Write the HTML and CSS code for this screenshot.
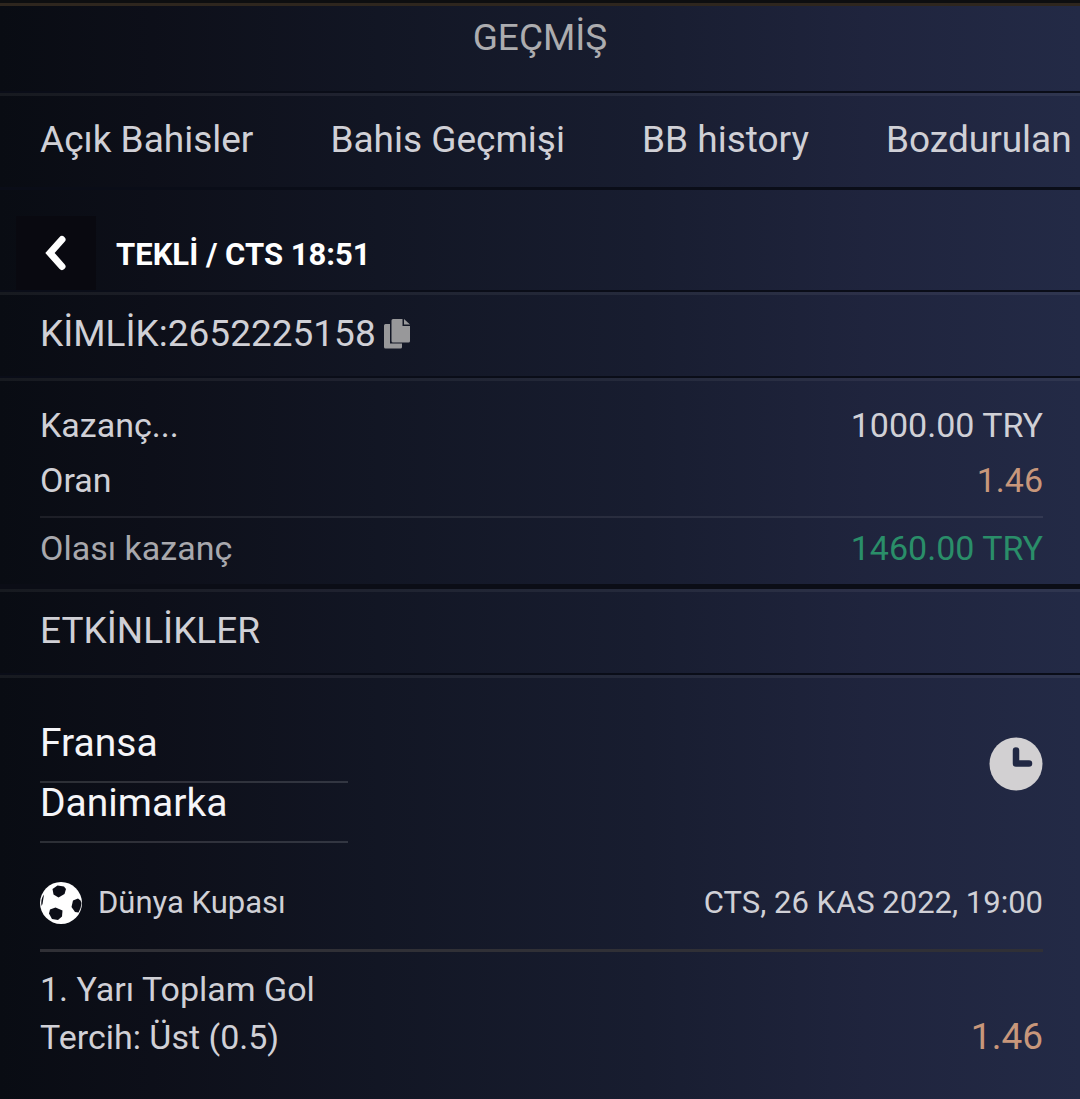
FILE: index.html
```html
<!DOCTYPE html>
<html lang="tr">
<head>
    <meta charset="UTF-8">
    <meta name="viewport" content="width=device-width, initial-scale=1.0">
    <title>Geçmiş</title>
    <link rel="stylesheet" href="styles.css">
</head>
<body>
    <header class="header">
        <h1>GEÇMİŞ</h1>
    </header>

    <nav class="tabs">
        <a href="#open">Açık Bahisler</a>
        <a href="#history">Bahis Geçmişi</a>
        <a href="#bb">BB history</a>
        <a href="#cashed">Bozdurulan</a>
    </nav>

    <main>
        <div class="ticket-head">
            <button class="back" type="button" aria-label="Geri">
                <svg width="24" height="36" viewBox="0 0 24 36">
                    <path d="M18 4.500L6 18L18 31.500" fill="none" stroke="#fff" stroke-width="7" stroke-linecap="round"/>
                </svg>
            </button>
            <h2>TEKLİ / CTS 18:51</h2>
        </div>

        <div class="bar">
            <span>KİMLİK:2652225158</span>
            <button class="copy" type="button" aria-label="Kopyala">
                <svg width="26" height="30" viewBox="0 0 26 30">
                    <path d="M1.500 5H6v19.500H18V28q0 1.500-1.500 1.500H1.500Q0 29.500 0 28V6.500Q0 5 1.500 5z"/>
                    <path d="M9 0H18.500V7H26V22q0 1.500-1.500 1.500H9Q7.500 23.500 7.500 22V1.500Q7.500 0 9 0z"/>
                    <path d="M20 0L26 5.500H20z"/>
                </svg>
            </button>
        </div>

        <dl class="summary">
            <div class="row">
                <dt>Kazanç...</dt>
                <dd>1000.00 TRY</dd>
            </div>
            <div class="row">
                <dt>Oran</dt>
                <dd class="odds">1.46</dd>
            </div>
            <div class="row total">
                <dt>Olası kazanç</dt>
                <dd>1460.00 TRY</dd>
            </div>
        </dl>

        <div class="bar">
            <h2>ETKİNLİKLER</h2>
        </div>

        <section class="match">
            <div class="match-top">
                <ul class="teams">
                    <li>Fransa</li>
                    <li>Danimarka</li>
                </ul>
                <svg class="clock" width="54" height="54" viewBox="0 0 54 54" role="img" aria-label="Bekliyor">
                    <circle cx="27" cy="27" r="26.500" fill="#d2d0d2"/>
                    <path d="M27 13.500V26.500H40" fill="none" stroke="#212844" stroke-width="6.500" stroke-linecap="round" stroke-linejoin="round"/>
                </svg>
            </div>

            <div class="league">
                <svg width="42" height="42" viewBox="0 0 42 42">
                    <circle cx="21" cy="21" r="21" fill="#fff"/>
                    <g fill="#0c0e17">
                        <path d="M12.500 7L17.500 3.500L24 4.500L26 7L24.500 12L18.500 15.500L13.500 12.500z"/>
                        <path d="M33 18.500L38 16.500L40.500 18.500L41.500 21Q41 27 38.500 30.500L35 30L31.500 25z"/>
                        <path d="M15.500 25.500L22.500 28.500L22 34.500L18 38L12 37L9 31.500L10 27.500z"/>
                        <path d="M4 12.500L2.500 22L1.500 24Q0.500 17 4 12.500z"/>
                    </g>
                </svg>
                <span>Dünya Kupası</span>
                <time datetime="2022-11-26T19:00">CTS, 26 KAS 2022, 19:00</time>
            </div>

            <div class="pick">
                <div>
                    <p>1. Yarı Toplam Gol</p>
                    <p>Tercih: Üst (0.5)</p>
                </div>
                <span class="odds">1.46</span>
            </div>
        </section>
    </main>
</body>
</html>
```
FILE: styles.css
```css
* {
    box-sizing: border-box;
}
body {
    margin: 0;
    min-height: 100vh;
    border-top: 3px solid #0d0e10;
    font-family: Roboto, sans-serif;
    font-size: 37px;
    line-height: 48px;
    color: #d0d0d6;
    background: linear-gradient(90deg, #090c13 0%, #0d0f19 14%, #121624 35%, #181d30 60%, #1f243d 80%, #232a46 100%);
}
h1, h2, p, ul, dl, dd {
    margin: 0;
    padding: 0;
    font-size: inherit;
    font-weight: 400;
}
button {
    border: none;
    padding: 0;
    background: none;
    cursor: pointer;
}
svg {
    display: block;
}

.header {
    border-top: 3px solid #2e261e;
    border-bottom: 2px solid #0a0d18;
    padding: 8px 40px 29px;
    text-align: center;
    color: #acacaf;
}

.tabs {
    display: flex;
    gap: 77px;
    padding: 20px 40px 23px;
    border-top: 3px solid rgba(255, 255, 255, 0.06);
    border-bottom: 3px solid #0a0d18;
    overflow: hidden;
    white-space: nowrap;
}
.tabs a {
    color: inherit;
    text-decoration: none;
}

.ticket-head {
    display: flex;
    align-items: center;
    gap: 20px;
    padding: 26px 16px 0;
    border-bottom: 2px solid #0a0d18;
}
.ticket-head h2 {
    padding-top: 4px;
    font-size: 31px;
    font-weight: 700;
    color: #fff;
}
.back {
    display: flex;
    align-items: center;
    justify-content: center;
    width: 80px;
    height: 74px;
    background: #090910;
}

.bar {
    display: flex;
    align-items: center;
    gap: 8px;
    padding: 15px 40px 18px;
    border-top: 3px solid rgba(255, 255, 255, 0.06);
    border-bottom: 2px solid #0a0d18;
}
.copy {
    fill: #98989a;
}

.summary {
    padding: 17px 37px 8px 40px;
    border-top: 3px solid rgba(255, 255, 255, 0.06);
    border-bottom: 5px solid #0b0d16;
    font-size: 34px;
    line-height: 55px;
}
.row {
    display: flex;
    justify-content: space-between;
}
.total {
    margin-top: 8px;
    padding-top: 3px;
    border-top: 2px solid rgba(255, 255, 255, 0.08);
    color: #a8a8ad;
}
.total dd {
    color: #2a8e69;
}
.odds {
    color: #c8977b;
}

.match {
    padding: 45px 37px 36px 40px;
    border-top: 3px solid rgba(255, 255, 255, 0.06);
    font-size: 34px;
}
.match-top {
    display: flex;
    justify-content: space-between;
    align-items: flex-start;
}
.teams {
    width: 308px;
    list-style: none;
    font-size: 39px;
    line-height: 40px;
    color: #f5f5f8;
}
.teams li {
    padding-bottom: 18px;
    border-bottom: 2px solid rgba(255, 255, 255, 0.14);
}
.clock {
    margin-top: 14px;
}

.league {
    display: flex;
    align-items: center;
    gap: 16px;
    margin-top: 36px;
    padding-bottom: 22px;
    border-bottom: 3px solid #303036;
    font-size: 31px;
}
.league time {
    margin-left: auto;
}

.pick {
    display: flex;
    justify-content: space-between;
    align-items: flex-end;
    padding-top: 13px;
}
.pick .odds {
    font-size: 37px;
}
```
